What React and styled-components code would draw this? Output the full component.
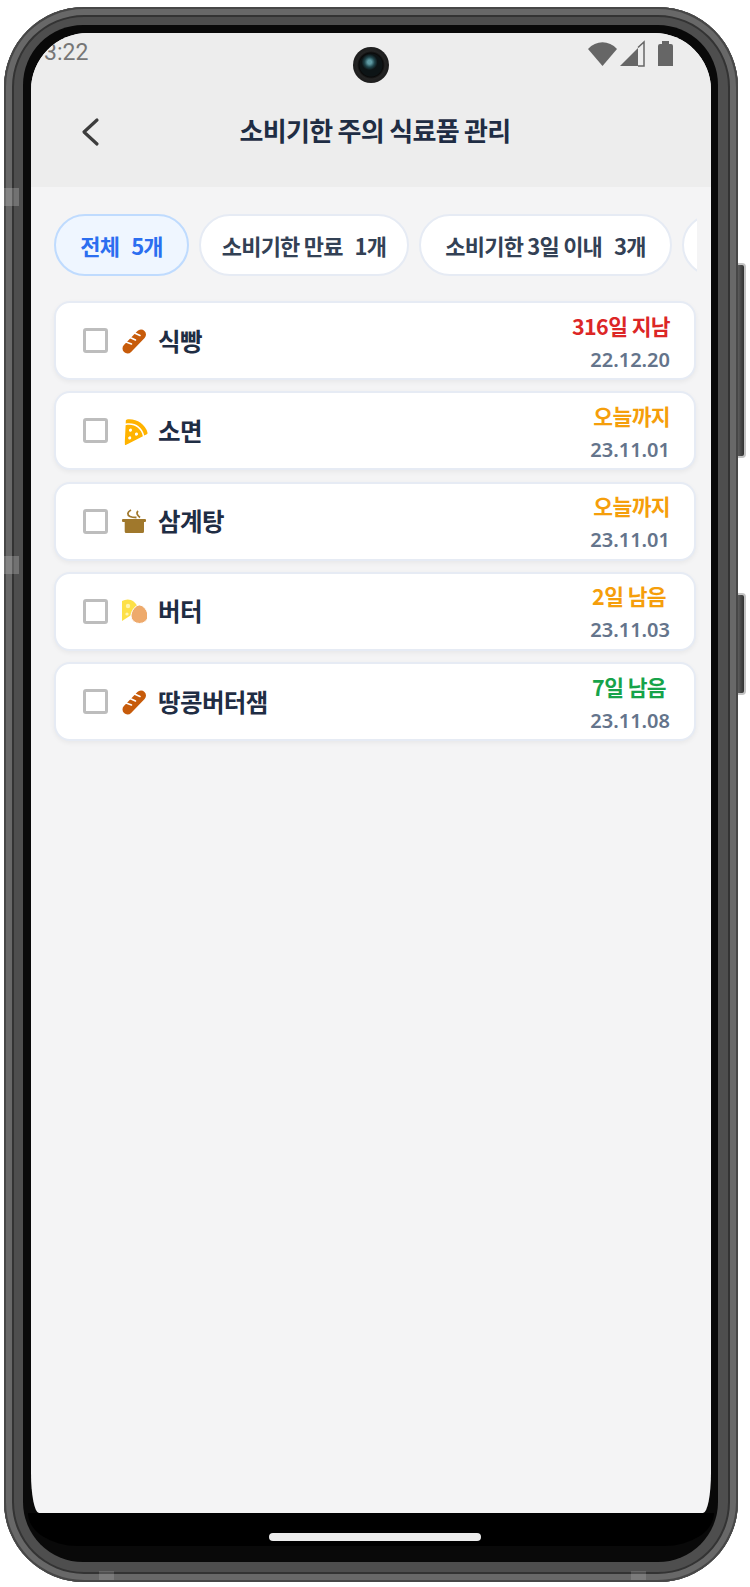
import React from "react";
import styled, {createGlobalStyle} from "styled-components";
import {FaPizzaSlice} from "react-icons/fa";

const GlobalStyle = createGlobalStyle`
	html, body {
		margin: 0;
		padding: 0;
		background: #fff;
	}
	body {
		font-family: "Noto Sans CJK KR", "Noto Sans", sans-serif;
	}
`;

const Page = styled.div`
	width: 750px;
	height: 1587px;
	padding: 7px 12px 5px 4px;
	box-sizing: border-box;
	overflow: hidden;
`;

const Phone = styled.div`
	position: relative;
	height: 100%;
	box-sizing: border-box;
	padding: 18px 20px 20px 19px;
	border-radius: 80px;
	background: #4e4e4e;
	box-shadow: inset 0 0 0 2px #474747, inset 0 0 0 8px #686868, inset 0 0 0 10px #333;
`;

const Bezel = styled.div`
	height: 100%;
	box-sizing: border-box;
	padding: 8px 7px 0 8px;
	border-radius: 60px;
	background: #090909;
	display: flex;
	flex-direction: column;
	overflow: hidden;
`;

const SideButton = styled.div`
	position: absolute;
	right: -8px;
	top: ${(p) => p.$top}px;
	width: 8px;
	height: ${(p) => p.$height}px;
	box-sizing: border-box;
	border: 2px solid #c4c4c4;
	border-left: none;
	border-radius: 0 4px 4px 0;
	background: linear-gradient(90deg, #5c5c5c, #333);
`;

const AntennaSide = styled.div`
	position: absolute;
	left: 0;
	top: ${(p) => p.$top}px;
	width: 15px;
	height: 18px;
	background: rgba(200, 200, 200, 0.3);
`;

const AntennaBottom = styled.div`
	position: absolute;
	bottom: 2px;
	left: ${(p) => p.$left}px;
	width: 15px;
	height: 9px;
	background: rgba(200, 200, 200, 0.2);
`;

const Screen = styled.div`
	height: 1480px;
	flex-shrink: 0;
	position: relative;
	display: flex;
	flex-direction: column;
	background: #f4f4f5;
	border-radius: 57px 57px 8px 8px / 57px 57px 40px 40px;
	overflow: hidden;
`;

const Header = styled.header`
	height: 154px;
	flex-shrink: 0;
	background: #ededed;
	display: flex;
	flex-direction: column;
`;

const StatusBar = styled.div`
	height: 60px;
	padding: 6px 37px 0 13px;
	display: flex;
	justify-content: space-between;
	align-items: flex-start;
`;

const Clock = styled.span`
	font-family: Roboto, sans-serif;
	font-size: 23px;
	line-height: 28px;
	color: #767676;
`;

const StatusIcons = styled.svg`
	width: 86px;
	height: 28px;
	display: block;
`;

const Camera = styled.div`
	position: absolute;
	left: 322px;
	top: 14px;
	width: 36px;
	height: 36px;
	border-radius: 50%;
	background:
		radial-gradient(circle at 46% 42%, #5f9aa3 0 2px, rgba(40, 90, 98, 0.7) 5px, transparent 8px),
		radial-gradient(circle at 50% 50%, #0d1416 0 11px, #0a0a0a 12px, #242424 14px, #1c1c1c 18px);
`;

const TitleBar = styled.div`
	position: relative;
	display: flex;
	justify-content: center;
	align-items: center;
	height: 40px;
	margin-top: 11px;
	padding-left: 8px;
`;

const BackIcon = styled.svg`
	position: absolute;
	left: 48px;
	top: 7px;
	width: 22px;
	height: 30px;
`;

const Title = styled.h1`
	margin: 0;
	font-size: 26px;
	font-weight: 700;
	line-height: 40px;
	color: #1f2d44;
	letter-spacing: -0.7px;
`;

const Content = styled.main`
	flex: 1;
	padding: 27px 16px 0 23px;
	display: flex;
	flex-direction: column;
	gap: 25px;
`;

const ChipRow = styled.div`
	display: flex;
	gap: 10px;
	overflow: hidden;
	width: 643px;
`;

const Chip = styled.div`
	flex-shrink: 0;
	box-sizing: border-box;
	width: ${(p) => p.$width}px;
	height: 62px;
	border-radius: 31px;
	display: flex;
	justify-content: center;
	align-items: center;
	gap: 12px;
	font-size: 22px;
	font-weight: 700;
	letter-spacing: -0.8px;
	white-space: nowrap;
	background: ${(p) => (p.$active ? "#eff6ff" : "#fff")};
	color: ${(p) => (p.$active ? "#2b6ef0" : "#334155")};
	border: 2px solid ${(p) => (p.$active ? "#bfdbfe" : "#e6ebf4")};
`;

const ItemList = styled.div`
	display: flex;
	flex-direction: column;
	gap: 11.3px;
`;

const ItemCard = styled.div`
	height: 79px;
	box-sizing: border-box;
	width: 642px;
	padding: 0 24px 0 27px;
	background: #fff;
	border: 2px solid #e6ebf4;
	border-radius: 16px;
	box-shadow: 0 2px 5px rgba(0, 0, 0, 0.05);
	display: flex;
	align-items: center;
`;

const CheckBox = styled.span`
	width: 25px;
	height: 25px;
	box-sizing: border-box;
	flex-shrink: 0;
	border: 3px solid #bdbdbd;
	border-radius: 3px;
	background: #fff;
`;

const IconSlot = styled.span`
	width: 26px;
	height: 26px;
	margin-left: 13px;
	flex-shrink: 0;
	display: flex;
	justify-content: center;
	align-items: center;
	& svg {
		display: block;
	}
`;

const ItemName = styled.span`
	margin-left: 11px;
	flex: 1;
	font-size: 24.5px;
	font-weight: 700;
	color: #1f2d44;
	letter-spacing: -0.6px;
	line-height: 32px;
`;

const ItemDates = styled.div`
	display: flex;
	flex-direction: column;
	align-items: flex-end;
	align-self: stretch;
	justify-content: center;
	gap: 9px;
	padding-top: 3px;
`;

const Remaining = styled.span`
	font-size: 21.5px;
	font-weight: 700;
	line-height: 26px;
	letter-spacing: -0.6px;
	padding-right: ${(p) => p.$inset || 0}px;
	color: ${(p) => p.$color};
`;

const ExpiryDate = styled.span`
	font-family: "Noto Sans", sans-serif;
	font-size: 20px;
	font-weight: 600;
	line-height: 24px;
	color: #64748b;
`;

const NavArea = styled.div`
	height: 33px;
	flex-shrink: 0;
	margin: 0 -3px;
	display: flex;
	justify-content: center;
	padding: 20px 0 0 8px;
	box-sizing: border-box;
	background: #000;
	border-radius: 0 0 50px 50px / 0 0 33px 33px;
`;

const HomeBar = styled.div`
	width: 212px;
	height: 8px;
	border-radius: 4px;
	background: #ececec;
`;

const PizzaIcon = styled(FaPizzaSlice)`
	width: 25px;
	height: 25px;
	color: #ffb300;
	transform: rotate(-12deg);
`;

const Baguette = () => (
	<svg width="26" height="26" viewBox="0 0 26 26">
		<path d="M6.5 20.5L20 6.5" stroke="#c75b0a" strokeWidth="10" strokeLinecap="round" fill="none" />
		<path d="M5 14l5.5 2M9 9.5l5.5 2.5M13.5 5l5.5 2.5" stroke="#fff" strokeWidth="1.6" strokeLinecap="round" fill="none" />
	</svg>
);

const Pot = () => (
	<svg width="26" height="26" viewBox="0 0 26 26">
		<path d="M10 2C6 4 6 7 9 8.5c2 1 5 1 6.5 1M17 3c-2 2-1 4 2 6.5" stroke="#a0782c" strokeWidth="1.8" fill="none" />
		<rect x="1" y="11" width="24" height="3" rx="1" fill="#a0782c" />
		<path d="M3.7 14H23v9.5a1.5 1.5 0 0 1-1.5 1.5H5.2a1.5 1.5 0 0 1-1.5-1.5z" fill="#a0782c" />
	</svg>
);

const CheeseEgg = () => (
	<svg width="26" height="26" viewBox="0 0 26 26">
		<path d="M1 3c6-3 13-2 17 9L1 23z" fill="#fde047" />
		<circle cx="7" cy="8" r="2.2" fill="#fff4b0" />
		<circle cx="6" cy="16" r="1.6" fill="#fff4b0" />
		<path d="M18.5 7c4 0 8.5 6 8.5 11a8.5 7.5 0 0 1-17 0c0-5 4.500-11 8.500-11z" fill="#eeaa6c" stroke="#fff" strokeWidth="1" />
	</svg>
);

const chips = [
	{label: "전체", count: "5개", width: 135, active: true},
	{label: "소비기한 만료", count: "1개", width: 210},
	{label: "소비기한 3일 이내", count: "3개", width: 253},
	{label: "소비기한 7일 이내", count: "1개", width: 253},
];

const items = [
	{name: "식빵", icon: <Baguette />, left: "316일 지남", color: "#dc2626", date: "22.12.20"},
	{name: "소면", icon: <PizzaIcon />, left: "오늘까지", color: "#f59e0b", date: "23.11.01"},
	{name: "삼계탕", icon: <Pot />, left: "오늘까지", color: "#f59e0b", date: "23.11.01"},
	{name: "버터", icon: <CheeseEgg />, left: "2일 남음", color: "#f59e0b", date: "23.11.03", inset: 4},
	{name: "땅콩버터잼", icon: <Baguette />, left: "7일 남음", color: "#16a34a", date: "23.11.08", inset: 4},
];

const App = () => {
	return (
		<Page>
			<GlobalStyle />
			<Phone>
				<SideButton $top={256} $height={195} />
				<SideButton $top={586} $height={102} />
				<AntennaSide $top={181} />
				<AntennaSide $top={549} />
				<AntennaBottom $left={95} />
				<AntennaBottom $left={627} />
				<Bezel>
					<Screen>
						<Header>
							<StatusBar>
								<Clock>3:22</Clock>
								<StatusIcons viewBox="0 0 86 28">
									<path d="M0 10C8 1 21 1 29 10L14.5 27z" fill="#666" />
									<path d="M32 27L50 9V27z" fill="#666" />
									<path d="M50 8.500L56 3V27H50" stroke="#666" strokeWidth="1.5" fill="none" />
									<path d="M70 7a2 2 0 0 1 2-2h2V2h7v3h2a2 2 0 0 1 2 2v20H70z" fill="#666" />
								</StatusIcons>
							</StatusBar>
							<Camera />
							<TitleBar>
								<BackIcon viewBox="0 0 22 30">
									<path d="M18 3L5 15l13 12" stroke="#3d3d3d" strokeWidth="3.2" fill="none" strokeLinecap="round" strokeLinejoin="round" />
								</BackIcon>
								<Title>소비기한 주의 식료품 관리</Title>
							</TitleBar>
						</Header>
						<Content>
							<ChipRow>
								{chips.map((chip) => (
									<Chip key={chip.label} $width={chip.width} $active={chip.active}>
										<span>{chip.label}</span>
										<span>{chip.count}</span>
									</Chip>
								))}
							</ChipRow>
							<ItemList>
								{items.map((item) => (
									<ItemCard key={item.name}>
										<CheckBox />
										<IconSlot>{item.icon}</IconSlot>
										<ItemName>{item.name}</ItemName>
										<ItemDates>
											<Remaining $color={item.color} $inset={item.inset}>{item.left}</Remaining>
											<ExpiryDate>{item.date}</ExpiryDate>
										</ItemDates>
									</ItemCard>
								))}
							</ItemList>
						</Content>
					</Screen>
					<NavArea>
						<HomeBar />
					</NavArea>
				</Bezel>
			</Phone>
		</Page>
	);
};

export default App;
